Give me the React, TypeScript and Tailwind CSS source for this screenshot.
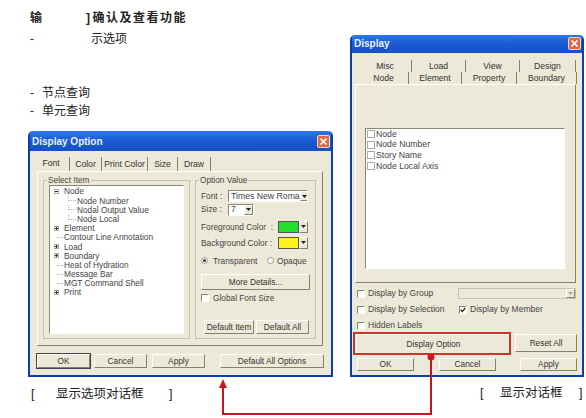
import type { ReactNode } from 'react';

const bevel = 'border border-t-white border-l-white border-r-[#85836f] border-b-[#85836f] bg-[#ece9d8]';
const sunken = 'border border-t-[#8a8875] border-l-[#8a8875] border-r-white border-b-white bg-white';

type ArvoreItem = { texto: string; nivel: 0 | 1; expansor?: 'mais' | 'menos' };

const arvore: ArvoreItem[] = [
  { texto: 'Node', nivel: 0, expansor: 'menos' },
  { texto: 'Node Number', nivel: 1 },
  { texto: 'Nodal Output Value', nivel: 1 },
  { texto: 'Node Local', nivel: 1 },
  { texto: 'Element', nivel: 0, expansor: 'mais' },
  { texto: 'Contour Line Annotation', nivel: 0 },
  { texto: 'Load', nivel: 0, expansor: 'mais' },
  { texto: 'Boundary', nivel: 0, expansor: 'mais' },
  { texto: 'Heat of Hydration', nivel: 0 },
  { texto: 'Message Bar', nivel: 0 },
  { texto: 'MGT Command Shell', nivel: 0 },
  { texto: 'Print', nivel: 0, expansor: 'mais' },
];

function Janela({ titulo, className, tituloH, children }: { titulo: string; className: string; tituloH: string; children: ReactNode }) {
  return (
    <div className={`flex shrink-0 flex-col rounded-t-[5px] border-2 border-t-0 border-[#0b3fb0] bg-[#ece9d8] ${className}`}>
      <div className={`flex shrink-0 items-center justify-between rounded-t-[4px] bg-gradient-to-b from-[#2b78e8] via-[#1a5ad4] to-[#1650c4] pl-[2px] pr-[1px] ${tituloH}`}>
        <span className="text-[10px] font-bold text-[#e8f0fb]">{titulo}</span>
        <span className="flex h-[13px] w-[13px] items-center justify-center rounded-[2px] border border-[#f3d5c8] bg-[#dd6a45]">
          <svg width="9" height="9" viewBox="0 0 9 9">
            <path d="M1.5 1.5 7.5 7.5M7.5 1.5 1.5 7.5" stroke="#fff" strokeWidth="1.7" />
          </svg>
        </span>
      </div>
      {children}
    </div>
  );
}

function Botao({ children, className = '' }: { children: ReactNode; className?: string }) {
  return (
    <div className={`flex shrink-0 items-center justify-center whitespace-nowrap text-[8.3px] text-[#333] ${bevel} ${className}`}>{children}</div>
  );
}

function Caixa({ marcada }: { marcada?: boolean }) {
  return (
    <span className={`flex h-[8px] w-[8px] shrink-0 items-center justify-center ${sunken}`}>
      {marcada && (
        <svg width="6" height="6" viewBox="0 0 6 6">
          <path d="M.7 2.8 2.3 4.6 5.3 1" fill="none" stroke="#222" strokeWidth="1.3" />
        </svg>
      )}
    </span>
  );
}

function Radio({ marcado }: { marcado?: boolean }) {
  return (
    <span className="flex h-[7px] w-[7px] shrink-0 items-center justify-center rounded-full border border-[#9a9884] bg-white">
      {marcado && <span className="h-[3px] w-[3px] rounded-full bg-[#333]" />}
    </span>
  );
}

function Seta({ apagada }: { apagada?: boolean }) {
  return (
    <span className={`flex w-[9px] shrink-0 items-center justify-center self-stretch ${bevel}`}>
      <svg width="5" height="3" viewBox="0 0 5 3">
        <path d="M0 0h5L2.5 3z" fill={apagada ? '#a8a694' : '#222'} />
      </svg>
    </span>
  );
}

function Combo({ texto, className }: { texto: string; className: string }) {
  return (
    <div className={`flex items-center overflow-hidden whitespace-nowrap pl-[2px] text-[8.7px] text-[#444] ${sunken} ${className}`}>
      <span className="flex-1">{texto}</span>
      <Seta />
    </div>
  );
}

function LinhaCor({ rotulo, cor }: { rotulo: string; cor: string }) {
  return (
    <div className="flex h-[12px] w-[107px] items-center justify-between text-[8.3px] text-[#444]">
      <span className="whitespace-pre">{rotulo}</span>
      <div className="flex h-[12px] items-stretch">
        <span className={`w-[21px] border border-[#555] ${cor}`} />
        <Seta />
      </div>
    </div>
  );
}

function Arvore() {
  return (
    <div className={`h-[149px] pt-[1px] ${sunken}`}>
      {arvore.map((item) => (
        <div key={item.texto} className="relative flex h-[9.2px] items-center whitespace-nowrap text-[8.3px] text-[#444]">
          {item.expansor && (
            <span className="absolute left-[4px] top-[2px] flex h-[5px] w-[5px] items-center justify-center border border-[#aaa] bg-white">
              <span className="relative h-px w-[3px] bg-[#333]">
                {item.expansor === 'mais' && <span className="absolute left-[1px] top-[-1px] h-[3px] w-px bg-[#333]" />}
              </span>
            </span>
          )}
          {!item.expansor && item.nivel === 1 && (
            <span className="absolute left-[18px] top-0 h-[5px] w-[8px] border-b border-l border-dotted border-[#b5b5b5]" />
          )}
          {!item.expansor && item.nivel === 0 && (
            <span className="absolute left-[7px] top-[4px] w-[6px] border-t border-dotted border-[#b5b5b5]" />
          )}
          <span className={item.nivel === 1 ? 'ml-[27px]' : 'ml-[14px]'}>{item.texto}</span>
        </div>
      ))}
    </div>
  );
}

function Aba({ texto, largura, ativa }: { texto: string; largura: string; ativa?: boolean }) {
  return (
    <div className={`flex items-center justify-center border-r border-r-[#85836f] text-[8.6px] text-[#333] ${largura} ${ativa ? 'pb-[2px] pr-[4px]' : ''}`}>
      {texto}
    </div>
  );
}

function DialogoOpcao() {
  return (
    <Janela titulo="Display Option" className="h-[246px] w-[305px]" tituloH="h-[20px]">
      <div className="flex flex-col px-[7px] pt-[6px]">
        <div className="flex h-[14px]">
          <Aba texto="Font" largura="w-[33px]" ativa />
          <Aba texto="Color" largura="w-[32px]" />
          <Aba texto="Print Color" largura="w-[46px]" />
          <Aba texto="Size" largura="w-[30px]" />
          <Aba texto="Draw" largura="w-[33px]" />
        </div>
        <div className={`flex h-[175px] w-[286px] gap-[5px] pl-[5px] pt-[3px] ${bevel}`}>
          <fieldset className="h-[164px] w-[147px] border border-[#c4c1ae] px-[5px] pb-[3px]">
            <legend className="ml-[-2px] px-[1px] text-[8.3px] leading-[10px] text-[#444]">Select Item</legend>
            <Arvore />
          </fieldset>
          <fieldset className="h-[164px] w-[120px] border border-[#c4c1ae] px-[5px]">
            <legend className="ml-[-2px] px-[1px] text-[8.3px] leading-[10px] text-[#444]">Option Value</legend>
            <div className="mt-[5px] flex flex-col">
              <div className="flex items-center gap-[2px] text-[8.3px] text-[#444]">
                <span className="w-[25px] whitespace-pre">Font :</span>
                <Combo texto="Times New Roma" className="h-[12px] w-[80px]" />
              </div>
              <div className="mt-[1px] flex items-center gap-[2px] text-[8.3px] text-[#444]">
                <span className="w-[25px] whitespace-pre">Size :</span>
                <Combo texto="7" className="h-[12px] w-[26px]" />
              </div>
              <div className="mt-[5px] flex flex-col gap-[4px]">
                <LinhaCor rotulo="Foreground Color  :" cor="bg-[#22e02a]" />
                <LinhaCor rotulo="Background Color :" cor="bg-[#fff21c]" />
              </div>
              <div className="mt-[7px] flex h-[10px] items-center text-[8.3px] text-[#444]">
                <Radio marcado />
                <span className="ml-[5px] w-[54px]">Transparent</span>
                <Radio />
                <span className="ml-[3px]">Opaque</span>
              </div>
              <Botao className="mt-[8px] h-[16px] w-[109px]">More Details...</Botao>
              <div className="mt-[3px] flex h-[11px] items-center gap-[4px] text-[8.3px] text-[#444]">
                <Caixa />
                <span>Global Font Size</span>
              </div>
              <div className="mt-[16px] flex gap-[2px] pl-[3px]">
                <Botao className="h-[14px] w-[50px]">Default Item</Botao>
                <Botao className="h-[14px] w-[53px]">Default All</Botao>
              </div>
            </div>
          </fieldset>
        </div>
        <div className="mt-[8px] flex w-[287px]">
          <Botao className="h-[14px] w-[53px] outline outline-1 outline-[#444]">OK</Botao>
          <Botao className="ml-[4px] h-[14px] w-[53px]">Cancel</Botao>
          <Botao className="ml-[5px] h-[14px] w-[53px]">Apply</Botao>
          <Botao className="ml-[15px] h-[14px] w-[104px]">Default All Options</Botao>
        </div>
      </div>
    </Janela>
  );
}

const abasFundo = [
  { texto: 'Misc', largura: 'w-[53px]' },
  { texto: 'Load', largura: 'w-[54px]' },
  { texto: 'View', largura: 'w-[54px]' },
  { texto: 'Design', largura: 'w-[56px]' },
];

const abasFrente = [
  { texto: 'Node', largura: 'w-[50px]' },
  { texto: 'Element', largura: 'w-[53px]' },
  { texto: 'Property', largura: 'w-[55px]' },
  { texto: 'Boundary', largura: 'w-[60px]' },
];

const itensLista = ['Node', 'Node Number', 'Story Name', 'Node Local Axis'];

function DialogoDisplay() {
  return (
    <Janela titulo="Display" className="h-[342px] w-[234px]" tituloH="h-[18px] pb-[2px]">
      <div className="flex flex-col px-[3px] pt-[7px]">
        <div className="ml-[4px] flex h-[12px]">
          {abasFundo.map((aba) => (
            <Aba key={aba.texto} texto={aba.texto} largura={aba.largura} />
          ))}
        </div>
        <div className="ml-[4px] flex h-[12px]">
          {abasFrente.map((aba) => (
            <Aba key={aba.texto} texto={aba.texto} largura={aba.largura} />
          ))}
        </div>
        <div className={`h-[199px] w-[221px] pl-[9px] pt-[43px] ${bevel}`}>
          <div className={`h-[141px] w-[200px] ${sunken}`}>
            {itensLista.map((item) => (
              <div key={item} className="flex h-[10.6px] items-center gap-px text-[8.7px] text-[#444]">
                <span className="ml-[1px] h-[8px] w-[8px] border border-[#aaa] bg-white" />
                {item}
              </div>
            ))}
          </div>
        </div>
        <div className="mt-[5px] flex flex-col gap-[5px] pl-[2px] text-[8.5px] text-[#444]">
          <div className="flex h-[11px] items-center">
            <Caixa />
            <span className="ml-[3px] w-[90px]">Display by Group</span>
            <div className="flex h-[11px] w-[118px] items-center justify-end border border-[#c4c1ae] bg-[#ece9d8]">
              <Seta apagada />
            </div>
          </div>
          <div className="flex h-[11px] items-center">
            <Caixa />
            <span className="ml-[3px] w-[91px]">Display by Selection</span>
            <Caixa marcada />
            <span className="ml-[3px]">Display by Member</span>
          </div>
          <div className="flex h-[11px] items-center">
            <Caixa />
            <span className="ml-[3px]">Hidden Labels</span>
          </div>
        </div>
        <div className="mt-[3px] flex">
          <Botao className="ml-[1px] h-[20px] w-[155px]">Display Option</Botao>
          <Botao className="ml-[4px] h-[18px] w-[62px]">Reset All</Botao>
        </div>
        <div className="mt-[4px] flex">
          <Botao className="ml-[2px] h-[13px] w-[57px]">OK</Botao>
          <Botao className="ml-[25px] h-[13px] w-[57px]">Cancel</Botao>
          <Botao className="ml-[24px] h-[13px] w-[57px]">Apply</Botao>
        </div>
      </div>
    </Janela>
  );
}

export default function App() {
  return (
    <div className="relative flex h-[418px] w-[586px] overflow-hidden bg-white font-['Liberation_Sans','Noto_Sans_CJK_SC',sans-serif] text-[#222]">
      <div className="w-[350px] shrink-0 pl-[28px] pt-[8px]">
        <div className="flex h-[20px] items-center pl-[2px] text-[12px] font-bold tracking-[1.5px]">
          <span className="w-[56px]">输</span>
          <span className="mr-[1px]">]</span>
          <span>确认及查看功能</span>
        </div>
        <div className="mt-[1px] flex h-[20px] items-center pl-[2px] text-[12px]">
          <span className="w-[61px]">-</span>
          <span>示选项</span>
        </div>
        <div className="mt-[35px] flex h-[18px] items-center gap-[8px] pl-[2px] text-[12px]">
          <span>-</span>
          <span>节点查询</span>
        </div>
        <div className="flex h-[18px] items-center gap-[8px] pl-[2px] text-[12px]">
          <span>-</span>
          <span>单元查询</span>
        </div>
        <div className="mt-[11px]">
          <DialogoOpcao />
        </div>
        <div className="mt-[9px] flex h-[16px] items-center pl-[3px] text-[12.5px]">
          <span className="w-[25px]">[</span>
          <span className="w-[113px]">显示选项对话框</span>
          <span>]</span>
        </div>
      </div>
      <div className="pt-[35px]">
        <DialogoDisplay />
        <div className="mt-[8px] flex h-[16px] items-center pl-[130px] text-[12.5px]">
          <span className="w-[20px]">[</span>
          <span className="w-[79px]">显示对话框</span>
          <span>]</span>
        </div>
      </div>
      {/* destaque vermelho sobre as duas janelas */}
      <div className="absolute left-[353px] top-[332px] h-[23px] w-[158px] border-2 border-[#d0322e]" />
      <svg className="absolute left-0 top-0" width="586" height="418" viewBox="0 0 586 418">
        <circle cx="431" cy="357" r="3.5" fill="#d8141c" />
        <path d="M431 357V414H223V386" fill="none" stroke="#c8161e" strokeWidth="2" />
        <path d="M223 379 219 388H227Z" fill="#c8161e" />
      </svg>
    </div>
  );
}
